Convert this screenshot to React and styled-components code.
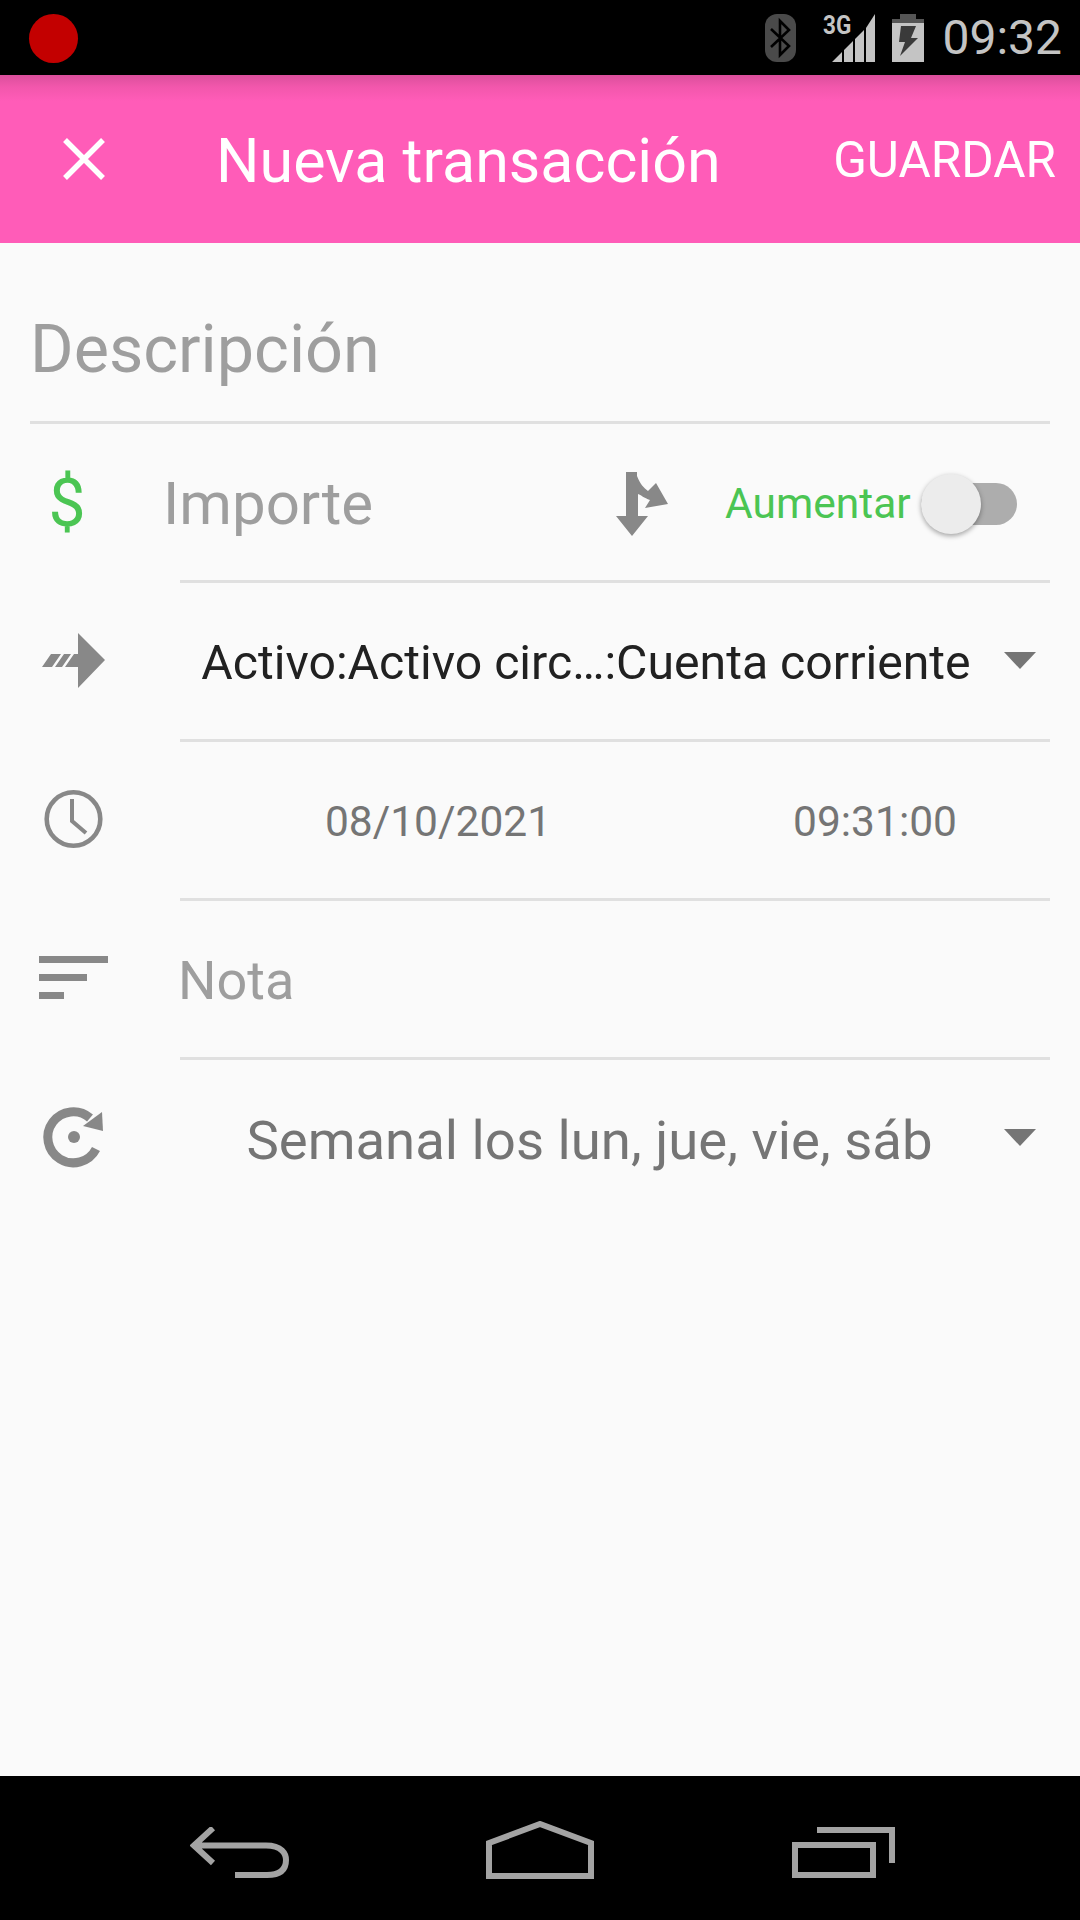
import styled, { createGlobalStyle } from 'styled-components';

const GlobalStyle = createGlobalStyle`
  html, body { margin: 0; padding: 0; background: #000; }
  body { font-family: Roboto, "Noto Sans", sans-serif; }
`;

const Screen = styled.div`
  width: 1080px;
  height: 1920px;
  display: flex;
  flex-direction: column;
  background: #fafafa;
  overflow: hidden;
`;

const StatusBar = styled.div`
  height: 75px;
  flex: none;
  background: #000;
  display: flex;
  align-items: center;
  padding: 0 18px 0 29px;
  box-sizing: border-box;
`;

const RecordDot = styled.div`
  width: 49px;
  height: 49px;
  border-radius: 50%;
  background: #c30000;
  margin-top: 1px;
`;

const StatusIcons = styled.div`
  margin-left: auto;
  display: flex;
  align-items: center;
`;

const SignalWrap = styled.div`
  position: relative;
  width: 52px;
  height: 50px;
  margin-left: 29px;
`;

const NetworkLabel = styled.span`
  position: absolute;
  left: -2px;
  top: -1px;
  font-size: 25px;
  line-height: 28px;
  font-weight: 700;
  color: #c4c4c4;
  transform: scaleX(0.9);
  transform-origin: left top;
`;

const Clock = styled.span`
  font-size: 48px;
  color: #c4c4c4;
  margin-left: 18px;
  line-height: 75px;
`;

const Toolbar = styled.header`
  height: 168px;
  flex: none;
  background: linear-gradient(to bottom, #db4f9c 0, #f257ac 12px, #ff5cb8 26px, #ff5cb8 100%);
  display: flex;
  align-items: center;
  color: #fff;
  padding: 0 24px 0 60px;
  box-sizing: border-box;
`;

const Title = styled.h1`
  margin: 4px 0 0 108px;
  font-size: 61px;
  font-weight: 400;
`;

const SaveButton = styled.span`
  margin: 1px 0 0 auto;
  font-size: 49.5px;
`;

const Form = styled.main`
  flex: 1;
  display: flex;
  flex-direction: column;
`;

const DescriptionField = styled.div`
  height: 181px;
  margin: 0 30px;
  box-sizing: border-box;
  border-bottom: 3px solid #e0e0e0;
  display: flex;
  align-items: center;
  padding-top: 34px;
  color: #9e9e9e;
  font-size: 66.5px;
`;

const Row = styled.div`
  height: 159px;
  display: flex;
  align-items: stretch;
`;

const IconSlot = styled.div`
  width: 180px;
  flex: none;
  display: flex;
  align-items: center;
  padding-left: 28px;
  box-sizing: border-box;
`;

const RowBody = styled.div`
  flex: 1;
  margin-right: 30px;
  padding-top: 3px;
  display: flex;
  align-items: center;
  position: relative;
  border-bottom: ${(p) => (p.$last ? '3px solid transparent' : '3px solid #e0e0e0')};
`;

const DollarSign = styled.span`
  font-size: 66px;
  color: #4bc553;
  width: 90px;
  text-align: center;
  margin: 0 0 0 -6px;
`;

const Placeholder = styled.span`
  color: #9e9e9e;
  font-size: ${(p) => p.$size}px;
  margin-left: ${(p) => p.$offset}px;
`;

const SplitIcon = styled.svg`
  width: 52px;
  height: 64px;
  margin-left: 243px;
  flex: none;
`;

const SwitchLabel = styled.span`
  color: #4bc553;
  font-size: 42.5px;
  margin-left: 57px;
`;

const SwitchTrack = styled.div`
  width: 96px;
  height: 42px;
  border-radius: 21px;
  background: #adadad;
  margin-left: 10px;
  position: relative;
`;

const SwitchThumb = styled.div`
  position: absolute;
  left: 0;
  top: -9px;
  width: 60px;
  height: 60px;
  border-radius: 50%;
  background: #ececec;
  box-shadow: 0 2px 5px rgba(0, 0, 0, 0.35);
`;

const SpinnerText = styled.span`
  flex: 1;
  text-align: center;
  font-size: ${(p) => p.$size}px;
  color: ${(p) => p.$color};
  padding-right: ${(p) => p.$pad}px;
`;

const DropArrow = styled.div`
  position: absolute;
  right: 14px;
  top: 69px;
  width: 0;
  height: 0;
  border-left: 16px solid transparent;
  border-right: 16px solid transparent;
  border-top: 17px solid #757575;
`;

const DateTimeText = styled.span`
  flex: 1;
  text-align: center;
  font-size: 42.5px;
  color: #757575;
`;

const DateCell = styled(DateTimeText)`
  flex: 0 0 516px;
`;

const TimeCell = styled(DateTimeText)`
  padding-left: 4px;
`;

const NavBar = styled.nav`
  height: 144px;
  flex: none;
  background: #000;
  display: flex;
  align-items: flex-start;
  padding: 51px 0 0 190px;
  box-sizing: border-box;
`;

const NavIcon = styled.svg`
  flex: none;
  margin-left: ${(p) => p.$gap}px;
  margin-top: ${(p) => p.$top || 0}px;
`;

const Glyph = styled.svg`
  width: 90px;
  height: 90px;
  display: block;
  margin-bottom: 5px;
`;

export default function App() {
  return (
    <>
      <GlobalStyle />
      <Screen>
        <StatusBar>
          <RecordDot />
          <StatusIcons>
            <svg width="31" height="48" viewBox="0 0 31 48">
              <rect x="0" y="0" width="31" height="48" rx="12" fill="#4a4a4a" />
              <path d="M6 15 L24 32 L15 41 V7 L24 16 L6 33" fill="none" stroke="#000" strokeWidth="2.6" />
            </svg>
            <SignalWrap>
              <NetworkLabel>3G</NetworkLabel>
              <svg width="52" height="50" viewBox="0 0 52 50">
                <path d="M7 49 L17 39 V49 Z M19 37 L28 28 V49 H19 Z M30 26 L39 17 V49 H30 Z" fill="#c4c4c4" />
                <path d="M41 15 L50 1 V49 H41 Z" fill="#c4c4c4" />
              </svg>
            </SignalWrap>
            <svg width="32" height="48" viewBox="0 0 32 48" style={{ marginLeft: 15 }}>
              <path d="M0 5 H32 V48 H0 Z" fill="#c4c4c4" />
              <path d="M8 0 H24 V5 H32 V9 H0 V5 H8 Z" fill="#555" />
              <path d="M9 12 H24 L19 24 H26 L8 42 L13 28 H7 Z" fill="#3a3a3a" />
            </svg>
            <Clock>09:32</Clock>
          </StatusIcons>
        </StatusBar>
        <Toolbar>
          <svg width="48" height="48" viewBox="0 0 48 48">
            <path d="M5 5 L43 43 M43 5 L5 43" stroke="#fff" strokeWidth="5.5" />
          </svg>
          <Title>Nueva transacción</Title>
          <SaveButton>GUARDAR</SaveButton>
        </Toolbar>
        <Form>
          <DescriptionField>Descripción</DescriptionField>
          <Row>
            <IconSlot>
              <DollarSign>$</DollarSign>
            </IconSlot>
            <RowBody>
              <Placeholder $size={60} $offset={-17}>Importe</Placeholder>
              <SplitIcon viewBox="0 0 52 64">
                <path d="M10 0 H21 V4 C24 12 28 16 32 19 L40 11 L52 32 L29 36 L34 28 C28 26 25 23 22 22 V44 H32 L16 64 L0 44 H10 Z" fill="#888" />
              </SplitIcon>
              <SwitchLabel>Aumentar</SwitchLabel>
              <SwitchTrack>
                <SwitchThumb />
              </SwitchTrack>
            </RowBody>
          </Row>
          <Row>
            <IconSlot>
              <Glyph viewBox="0 0 90 90">
                <path d="M14 52 L23 39 H33 L24 52 Z M27 52 L36 39 H43 L34 52 Z M37 52 L46 39 H50 V18 L77 45 L50 73 V52 Z" fill="#888" />
              </Glyph>
            </IconSlot>
            <RowBody>
              <SpinnerText $size={48.2} $color="#212121" $pad={58}>Activo:Activo circ…:Cuenta corriente</SpinnerText>
              <DropArrow />
            </RowBody>
          </Row>
          <Row>
            <IconSlot>
              <Glyph viewBox="0 0 90 90">
                <circle cx="45.5" cy="45" r="26.8" fill="none" stroke="#888" strokeWidth="4.6" />
                <path d="M44 25 V47 L58 59" fill="none" stroke="#888" strokeWidth="4" />
              </Glyph>
            </IconSlot>
            <RowBody>
              <DateCell>08/10/2021</DateCell>
              <TimeCell>09:31:00</TimeCell>
            </RowBody>
          </Row>
          <Row>
            <IconSlot>
              <Glyph viewBox="0 0 90 90">
                <path d="M11 23 H80 V30 H11 Z M11 41 H59 V48 H11 Z M11 59 H36 V66 H11 Z" fill="#888" />
              </Glyph>
            </IconSlot>
            <RowBody>
              <Placeholder $size={54} $offset={-2}>Nota</Placeholder>
            </RowBody>
          </Row>
          <Row>
            <IconSlot>
              <Glyph viewBox="0 0 90 90">
                <path d="M68 57 A25.5 25.5 0 1 1 62 26" fill="none" stroke="#888" strokeWidth="9" />
                <path d="M74 20 L75 39 L55 34 Z" fill="#888" />
                <circle cx="46" cy="45" r="6" fill="#888" />
              </Glyph>
            </IconSlot>
            <RowBody $last>
              <SpinnerText $size={54.5} $color="#757575" $pad={51}>Semanal los lun, jue, vie, sáb</SpinnerText>
              <DropArrow />
            </RowBody>
          </Row>
        </Form>
        <NavBar>
          <NavIcon width="100" height="52" viewBox="0 0 100 52" $gap={0}>
            <path d="M23 1 L4 18.5 L23 36 M5 18.5 H76 C92 18.5 96 27 96 33 C96 42 91 48 77 48 H45" fill="none" stroke="#a3a3a3" strokeWidth="6" />
          </NavIcon>
          <NavIcon width="108" height="58" viewBox="0 0 108 58" $gap={196} $top={-6}>
            <path d="M3 55 V22 L54 3 L105 22 V55 Z" fill="none" stroke="#a3a3a3" strokeWidth="6" />
          </NavIcon>
          <NavIcon width="104" height="52" viewBox="0 0 104 52" $gap={198}>
            <path d="M25 3 H100 V36" fill="none" stroke="#a3a3a3" strokeWidth="6" />
            <path d="M3 18 H81 V48 H3 Z" fill="none" stroke="#a3a3a3" strokeWidth="6" />
          </NavIcon>
        </NavBar>
      </Screen>
    </>
  );
}
